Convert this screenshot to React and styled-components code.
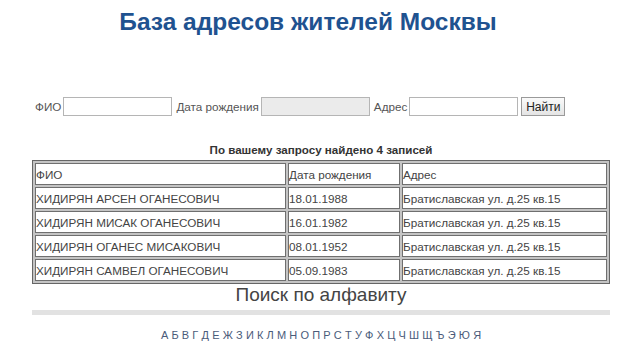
import React from "react";
import styled, { createGlobalStyle } from "styled-components";

const Global = createGlobalStyle`
  body {
    margin: 0;
    background: #fff;
    font-family: "Liberation Sans", Arial, sans-serif;
  }
`;

const Page = styled.div`
  width: 578px;
  margin: 0 30px 0 32px;
  padding-top: 8px;
`;

const Title = styled.h1`
  margin: 0 26px 0 0;
  font-size: 24.5px;
  line-height: 28px;
  font-weight: bold;
  color: #1f5290;
  text-align: center;
`;

const SearchForm = styled.form`
  display: flex;
  align-items: center;
  margin: 61px 0 0 3px;
  font-size: 11.7px;
  color: #555;
`;

const Label = styled.label`
  margin-right: 2px;
`;

const Field = styled.input`
  box-sizing: border-box;
  width: 109px;
  height: 19px;
  margin: 0 4px 0 0;
  padding: 1px 2px;
  border: 1px solid #b5b5b5;
  background: ${(p) => (p.$disabled ? "#ebebeb" : "#fff")};
  font: inherit;
`;

const Button = styled.button`
  box-sizing: border-box;
  width: 44px;
  height: 19px;
  padding: 0;
  margin-left: -1px;
  border: 1px solid #9a9a9a;
  background: linear-gradient(#fafafa, #e4e4e4);
  font-family: "Liberation Sans", Arial, sans-serif;
  font-size: 12px;
  color: #222;
`;

const Status = styled.div`
  margin-top: 27px;
  text-align: center;
  font-size: 11.6px;
  font-weight: bold;
  color: #333;
`;

const Table = styled.table`
  width: 578px;
  margin-top: 4px;
  border: 1px solid #666;
  border-spacing: 2px;
  background: #c4c4c4;
  font-size: 11.7px;
  color: #444;
`;

const Cell = styled.td`
  height: 20px;
  padding: 0;
  border: 1px solid #6f6f6f;
  background: #fff;
  width: ${(p) => p.$w}px;
`;

const Subtitle = styled.h2`
  margin: 0;
  font-size: 19px;
  line-height: 22px;
  font-weight: normal;
  color: #444;
  text-align: center;
`;

const Rule = styled.div`
  height: 5px;
  margin-top: 4px;
  background: #e2e2e2;
`;

const Letters = styled.nav`
  display: flex;
  justify-content: center;
  margin-top: 14px;
  font-size: 11px;
`;

const Letter = styled.a`
  color: #4a5b7a;
  text-decoration: none;
  padding: 0 1.6px;
`;

const rows = [
  ["ХИДИРЯН АРСЕН ОГАНЕСОВИЧ", "18.01.1988"],
  ["ХИДИРЯН МИСАК ОГАНЕСОВИЧ", "16.01.1982"],
  ["ХИДИРЯН ОГАНЕС МИСАКОВИЧ", "08.01.1952"],
  ["ХИДИРЯН САМВЕЛ ОГАНЕСОВИЧ", "05.09.1983"],
];

const alphabet = "АБВГДЕЖЗИКЛМНОПРСТУФХЦЧШЩЪЭЮЯ".split("");

export default function App() {
  return (
    <Page>
      <Global />
      <Title>База адресов жителей Москвы</Title>
      <SearchForm onSubmit={(e) => e.preventDefault()}>
        <Label>ФИО</Label>
        <Field />
        <Label>Дата рождения</Label>
        <Field $disabled disabled />
        <Label>Адрес</Label>
        <Field />
        <Button type="submit">Найти</Button>
      </SearchForm>
      <Status>По вашему запросу найдено 4 записей</Status>
      <Table>
        <tbody>
          <tr>
            <Cell $w={249}>ФИО</Cell>
            <Cell $w={110}>Дата рождения</Cell>
            <Cell>Адрес</Cell>
          </tr>
          {rows.map(([name, date]) => (
            <tr key={name}>
              <Cell>{name}</Cell>
              <Cell>{date}</Cell>
              <Cell>Братиславская ул. д.25 кв.15</Cell>
            </tr>
          ))}
        </tbody>
      </Table>
      <Subtitle>Поиск по алфавиту</Subtitle>
      <Rule />
      <Letters>
        {alphabet.map((l) => (
          <Letter key={l} href="#">
            {l}
          </Letter>
        ))}
      </Letters>
    </Page>
  );
}
